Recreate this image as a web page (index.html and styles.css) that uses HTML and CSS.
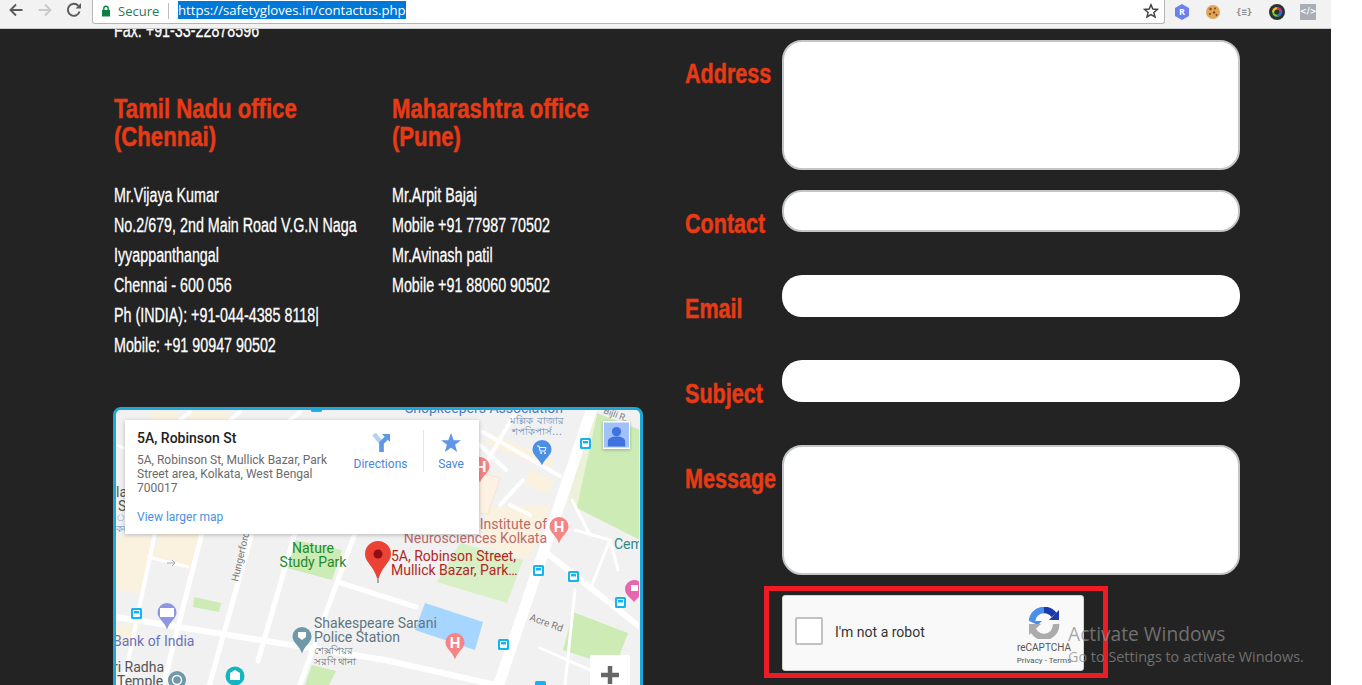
FILE: index.html
```html
<!DOCTYPE html>
<html lang="en">
<head>
<meta charset="utf-8">
<title>Contact us</title>
<link rel="stylesheet" href="styles.css">
</head>
<body>
<div class="window">
  <header class="toolbar">
    <div class="nav">
      <svg class="nav-icon" viewBox="0 0 16 16"><path d="M14.5 8H3M8 2.5 2.5 8 8 13.5" fill="none" stroke="#5a5a5a" stroke-width="1.9"/></svg>
      <svg class="nav-icon" viewBox="0 0 16 16"><path d="M1.5 8H13M8 2.5 13.5 8 8 13.5" fill="none" stroke="#c9c9c9" stroke-width="1.9"/></svg>
      <svg class="nav-icon" viewBox="0 0 16 16"><path d="M13.6 9.5A6 6 0 1 1 12.4 3.9" fill="none" stroke="#5a5a5a" stroke-width="1.9"/><path d="M9.6 6.4H15V1z" fill="#5a5a5a"/></svg>
    </div>
    <div class="omnibox">
      <svg class="lock" viewBox="0 0 10 12"><path d="M1 5h8v6.500H1z" fill="#0b8043"/><path d="M2.800 5V3.500a2.200 2.200 0 0 1 4.400 0V5" fill="none" stroke="#0b8043" stroke-width="1.400"/></svg>
      <span class="secure">Secure</span>
      <span class="omni-sep"></span>
      <span class="url">https://safetygloves.in/contactus.php</span>
      <svg class="star" viewBox="0 0 16 16"><path d="M8 1.800 9.800 6l4.600.4-3.500 3 1.100 4.500L8 11.500l-4 2.400 1.100-4.500-3.500-3L6.200 6z" fill="none" stroke="#444" stroke-width="1.500"/></svg>
    </div>
    <div class="exts">
      <svg class="ext" viewBox="0 0 16 16"><path d="M8 0 15 4v8l-7 4-7-4V4z" fill="#6a80ee"/><text x="8" y="11" class="ext-r">R</text></svg>
      <svg class="ext" viewBox="0 0 16 16"><circle cx="8" cy="8" r="7" fill="#e0a458"/><g fill="#7a4a1c"><circle cx="5.500" cy="5" r="1.200"/><circle cx="10" cy="4.500" r=".9"/><circle cx="9" cy="8.500" r="1.200"/><circle cx="5" cy="10" r="1"/><circle cx="11.500" cy="11" r="1"/></g></svg>
      <span class="ext-json">{≡}</span>
      <svg class="ext" viewBox="0 0 16 16"><circle cx="8" cy="8" r="8" fill="#2c3138"/><circle cx="8" cy="8" r="3.800" fill="none" stroke="#7ed321" stroke-width="2"/><path d="M8 4.200A3.800 3.800 0 0 1 11.800 8" fill="none" stroke="#e0218a" stroke-width="2"/><path d="M4.200 8A3.800 3.800 0 0 1 8 4.200" fill="none" stroke="#f8c300" stroke-width="2"/><path d="M8 11.800A3.800 3.800 0 0 0 11.800 8" fill="none" stroke="#1e6fe0" stroke-width="2"/></svg>
      <span class="ext-code">&lt;/&gt;</span>
    </div>
  </header>

  <main class="page">
    <section class="info">
      <p class="body-line fax">Fax: +91-33-22878596</p>
      <div class="offices">
        <article class="office">
          <h2 class="office-title">Tamil Nadu office<br>(Chennai)</h2>
          <p class="body-line">Mr.Vijaya Kumar</p>
          <p class="body-line">No.2/679, 2nd Main Road V.G.N Naga</p>
          <p class="body-line">Iyyappanthangal</p>
          <p class="body-line">Chennai - 600 056</p>
          <p class="body-line">Ph (INDIA): +91-044-4385 8118|</p>
          <p class="body-line">Mobile: +91 90947 90502</p>
        </article>
        <article class="office">
          <h2 class="office-title">Maharashtra office<br>(Pune)</h2>
          <p class="body-line">Mr.Arpit Bajaj</p>
          <p class="body-line">Mobile +91 77987 70502</p>
          <p class="body-line">Mr.Avinash patil</p>
          <p class="body-line">Mobile +91 88060 90502</p>
        </article>
      </div>

      <div class="map">
        <svg class="map-canvas" viewBox="116 410 523 275">
          <rect x="116" y="410" width="523" height="275" fill="#f1f1f1"/>
          <g fill="#fbf1df">
            <path d="M116 535h38l-12 60-26-6z"/><path d="M160 533h40l-10 36-38-9z"/><path d="M116 625h24l-8 18-16-3z"/>
            <path d="M490 433l64 27-4 10-64-26z"/><path d="M530 470l24 10-6 14-24-10z"/><path d="M487 507l63-2-8 24-14 30-48-14z"/>
            <path d="M150 412h30l-4 10h-26z"/><path d="M190 412h40l-4 8h-36z"/>
          </g>
          <path d="M479 472l21 6-12 36-9-1z" fill="#fdf1e4" stroke="#f9dcc0" stroke-width=".6"/>
          <g fill="#cdebb4">
            <path d="M295 540l47 10-10 30-45-12z"/>
            <path d="M194 597l27 6-2 9-26-5z"/>
            <path d="M573 612l55 21-13 34-52-17z"/>
            <path d="M312 665l24 6-8 16-24 0z"/>
            <path d="M597 413l43 17v110l-65-33z"/>
          </g>
          <path d="M460 543l63 17-16 43-70-21z" fill="#d9efc6"/>
          <path d="M597 415l-20 92-9-4 21-90z" fill="#ecf2d8"/>
          <path d="M425 603l58 19-8 28-60-20z" fill="#a6d6ff"/>
          <g fill="none" stroke="#fff" stroke-linecap="round">
            <path d="M593 405 497 690" stroke-width="11"/>
            <path d="M543 550 640 627" stroke-width="6"/>
            <path d="M110 616 385 660 500 686" stroke-width="6"/>
            <path d="M355 533 298 690" stroke-width="5"/>
            <path d="M295 533 258 661" stroke-width="5"/>
            <path d="M252 533 208 690" stroke-width="5"/>
            <path d="M202 533 162 690" stroke-width="5"/>
            <path d="M155 533 122 690" stroke-width="4"/>
            <path d="M148 557 188 567" stroke-width="3"/>
            <path d="M338 582 416 607" stroke-width="5"/>
            <path d="M483 432 560 476" stroke-width="4"/>
            <path d="M480 445 506 470" stroke-width="4"/>
            <path d="M523 480 500 505" stroke-width="4"/>
            <path d="M510 505 530 515" stroke-width="4"/>
            <path d="M520 405 482 470" stroke-width="4"/>
            <path d="M575 530 610 540 590 590" stroke-width="3"/>
            <path d="M610 540 618 570" stroke-width="3"/>
            <path d="M575 590 565 685" stroke-width="3"/>
            <path d="M540 648 590 670" stroke-width="3"/>
            <path d="M572 500 590 535" stroke-width="3"/>
            <path d="M116 445 130 450" stroke-width="3"/>
            <path d="M190 412 180 420M240 412 230 420M300 412 290 420" stroke-width="4"/>
          </g>
          <path d="M167 563h8m-3-3 3 3-3 3" fill="none" stroke="#9aa7b8" stroke-width="1"/>

          <g class="bengali">
            <text x="537" y="424" text-anchor="middle">মল্লিক বাজার</text>
            <text x="537" y="435" text-anchor="middle">শপকিপার্স…</text>
            <text x="116" y="521">ান</text>
            <text x="116" y="532">কল</text>
          </g>
          <text x="405" y="413" class="map-label blue">Shopkeepers Association</text>
          <text x="547" y="529" text-anchor="end" class="map-label red-soft">Institute of</text>
          <text x="547" y="543" text-anchor="end" class="map-label red-soft">Neurosciences Kolkata</text>
          <text x="313" y="553" text-anchor="middle" class="map-label green">Nature</text>
          <text x="313" y="567" text-anchor="middle" class="map-label green">Study Park</text>
          <text x="391" y="561" class="map-label red-strong">5A, Robinson Street,</text>
          <text x="391" y="575" class="map-label red-strong">Mullick Bazar, Park…</text>
          <text x="314" y="628" class="map-label slate">Shakespeare Sarani</text>
          <text x="314" y="642" class="map-label slate">Police Station</text>
          <text x="314" y="654" class="map-small slate">শেক্সপিয়র</text>
          <text x="314" y="665" class="map-small slate">সরণি থানা</text>
          <text x="113" y="646" class="map-label indigo">Bank of India</text>
          <text x="113" y="672" class="map-label gray">ri Radha</text>
          <text x="117" y="686" class="map-label gray">Temple</text>
          <text x="0" y="0" class="map-small road" transform="translate(529 620) rotate(20)">Acre Rd</text>
          <text x="0" y="0" class="map-small road" transform="translate(238 582) rotate(-77)">Hungerford</text>
          <text x="0" y="0" class="map-tiny road" transform="translate(603 413) rotate(20)">Bijli R…</text>
          <text x="614" y="549" class="map-label teal">Cem</text>
          <text x="116" y="497" class="map-label gray">la</text>
          <text x="118" y="511" class="map-label gray">S</text>

          <path d="M480 457a9.500 9.500 0 0 1 9.500 9.500c0 6-7 9-9.500 16-2.500-7-9.500-10-9.500-16a9.500 9.500 0 0 1 9.500-9.500z" fill="#f58484"/>
          <text x="481" y="472" class="pin-h">H</text>
          <path d="M559 517a9.500 9.500 0 0 1 9.500 9.500c0 6-7 9-9.500 17-2.500-8-9.500-11-9.500-17a9.500 9.500 0 0 1 9.500-9.500z" fill="#f58484"/>
          <text x="559" y="532" class="pin-h">H</text>
          <path d="M455 633a9.500 9.500 0 0 1 9.500 9.500c0 6-7 9-9.500 17-2.500-8-9.500-11-9.500-17a9.500 9.500 0 0 1 9.500-9.500z" fill="#f58484"/>
          <text x="455" y="648" class="pin-h">H</text>
          <path d="M542 440a9.500 9.500 0 0 1 9.500 9.500c0 6-7 9-9.500 16-2.500-7-9.500-10-9.500-16a9.500 9.500 0 0 1 9.500-9.500z" fill="#4b8fe6"/>
          <path d="M537 446h2l1 5h5l1-3.500h-7" fill="none" stroke="#fff" stroke-width="1"/><circle cx="541" cy="453" r=".9" fill="#fff"/><circle cx="545" cy="453" r=".9" fill="#fff"/>
          <path d="M167 603a9.500 9.500 0 0 1 9.500 9.500c0 6-7 9-9.500 17-2.500-8-9.500-11-9.500-17a9.500 9.500 0 0 1 9.500-9.500z" fill="#8f97e3"/>
          <rect x="160" y="608" width="14" height="9" fill="#fff"/>
          <path d="M302 627a9.500 9.500 0 0 1 9.500 9.500c0 6-7 9-9.500 17-2.500-8-9.500-11-9.500-17a9.500 9.500 0 0 1 9.500-9.500z" fill="#6f98a8"/>
          <path d="M298 632h8v5l-4 3-4-3z" fill="#fff"/>
          <circle cx="235" cy="676" r="9.500" fill="#12b5c1"/><path d="M230 673l5-3 5 3v7h-10z" fill="#fff"/>
          <circle cx="177" cy="680" r="9" fill="#6f98a8"/><circle cx="177" cy="680" r="4.500" fill="none" stroke="#fff" stroke-width="1.500"/>
          <path d="M634 580a9 9 0 0 1 9 9c0 6-6 9-9 13-3-4-9-7-9-13a9 9 0 0 1 9-9z" fill="#e667b0"/>
          <rect x="631" y="585" width="7" height="6" fill="#fff"/>

          <g class="transit">
            <rect x="131" y="608" width="11" height="11" rx="1.500"/>
            <rect x="580" y="438" width="11" height="11" rx="1.500"/>
            <rect x="533" y="565" width="11" height="11" rx="1.500"/>
            <rect x="568" y="571" width="11" height="11" rx="1.500"/>
            <rect x="615" y="597" width="11" height="11" rx="1.500"/>
            <rect x="498" y="639" width="11" height="11" rx="1.500"/>
            <rect x="535" y="681" width="11" height="11" rx="1.500"/>
            <rect x="311" y="405" width="11" height="7" rx="1.500"/>
          </g>
          <g fill="#fff">
            <rect x="133" y="610" width="7" height="7" rx="1"/><rect x="582" y="440" width="7" height="7" rx="1"/><rect x="535" y="567" width="7" height="7" rx="1"/><rect x="570" y="573" width="7" height="7" rx="1"/><rect x="617" y="599" width="7" height="7" rx="1"/><rect x="500" y="641" width="7" height="7" rx="1"/>
          </g>
          <g fill="#14b4f0">
            <rect x="134" y="611" width="5" height="2.500"/><rect x="583" y="441" width="5" height="2.500"/><rect x="536" y="568" width="5" height="2.500"/><rect x="571" y="574" width="5" height="2.500"/><rect x="618" y="600" width="5" height="2.500"/><rect x="501" y="642" width="5" height="2.500"/>
          </g>

          <path d="M378 541a13 13 0 0 1 13 13c0 9-10 12-13 28-3-16-13-19-13-28a13 13 0 0 1 13-13z" fill="#ea4335"/>
          <circle cx="378" cy="554" r="4.500" fill="#8f1010"/>
          <rect x="377" y="578" width="2" height="5" fill="#aaa"/>
        </svg>

        <div class="person-btn">
          <svg viewBox="0 0 26 26"><rect width="26" height="26" fill="#a1c1fb"/><circle cx="13" cy="9.500" r="4.800" fill="#3f74e0"/><path d="M4 25v-5c0-4 4-5.500 9-5.500s9 1.500 9 5.500v5z" fill="#3f74e0"/></svg>
        </div>
        <div class="zoom-btn"><svg viewBox="0 0 18 18"><path d="M9 0v18M0 9h18" stroke="#666" stroke-width="4.500"/></svg></div>

        <div class="card">
          <div class="card-main">
            <h3 class="card-title">5A, Robinson St</h3>
            <p class="card-address">5A, Robinson St, Mullick Bazar, Park Street area, Kolkata, West Bengal 700017</p>
            <a class="card-link">View larger map</a>
          </div>
          <div class="card-action directions">
            <svg viewBox="0 0 20 20"><path d="M3 1 10.500 10v9" fill="none" stroke="#b4d0f5" stroke-width="4.500"/><path d="M10.500 19v-9l5-5" fill="none" stroke="#5f97e6" stroke-width="4.500"/><path d="M11 1h8v8z" fill="#5f97e6"/></svg>
            <span>Directions</span>
          </div>
          <div class="card-action save">
            <svg viewBox="0 0 20 20"><path d="M10 0l2.700 7.200H20l-5.900 4.600L16.200 19 10 14.700 3.800 19l2.100-7.200L0 7.200h7.300z" fill="#5f97e6"/></svg>
            <span>Save</span>
          </div>
        </div>
      </div>
    </section>

    <form class="contact-form">
      <div class="form-row"><label class="form-label">Address</label><div class="field field-area"></div></div>
      <div class="form-row"><label class="form-label">Contact</label><div class="field field-line bordered"></div></div>
      <div class="form-row"><label class="form-label">Email</label><div class="field field-line"></div></div>
      <div class="form-row"><label class="form-label">Subject</label><div class="field field-line"></div></div>
      <div class="form-row"><label class="form-label">Message</label><div class="field field-area"></div></div>
      <div class="captcha-row">
        <div class="captcha">
          <span class="captcha-check"></span>
          <span class="captcha-text">I'm not a robot</span>
          <div class="captcha-brand">
            <svg viewBox="0 0 32 32"><path d="M4 14A12 12 0 0 1 16 3" fill="none" stroke="#4a8fe8" stroke-width="6.500"/><path d="M16 3A12 12 0 0 1 26 8" fill="none" stroke="#1c3aa9" stroke-width="6.500"/><path d="M21 13H31V3z" fill="#1c3aa9"/><path d="M1 14h13l-4 4z" fill="#4a8fe8"/><path d="M28 17A12 12 0 0 1 4 19" fill="none" stroke="#ababab" stroke-width="6.500"/><path d="M1 17h12L1 28z" fill="#ababab"/></svg>
            <span class="captcha-name">reCAPTCHA</span>
            <span class="captcha-terms">Privacy - Terms</span>
          </div>
        </div>
      </div>
    </form>
    <div class="watermark">
      <span class="wm-title">Activate Windows</span>
      <span class="wm-sub">Go to Settings to activate Windows.</span>
    </div>
  </main>
</div>
</body>
</html>
```

FILE: styles.css
```css
*, *::before { box-sizing: border-box; }
html, body { margin: 0; height: 100%; background: #fff; overflow: hidden; }
p, h2, h3 { margin: 0; }

.window { width: 1331px; height: 685px; overflow: hidden; display: flex; flex-direction: column; }

.toolbar { position: relative; z-index: 2; flex: 0 0 29px; height: 29px; display: flex; background: #f2f2f2; border-bottom: 1px solid #c9c9c9; }
.nav { width: 92px; display: flex; gap: 13px; padding: 2px 0 0 8px; }
.nav-icon { width: 16px; height: 16px; flex: none; }
.omnibox { width: 1073px; height: 24px; display: flex; align-items: center; background: #fff; border: 1px solid #b5b5b5; border-top: 0; border-radius: 0 0 3px 3px; padding: 0 5px 2px 8px; font-family: "Open Sans", sans-serif; }
.lock { width: 10px; height: 12px; flex: none; }
.secure { color: #2c7a55; margin-left: 7px; width: 42px; font-size: 13px; }
.omni-sep { width: 1px; height: 16px; background: #bdbdbd; margin: 0 9px 0 8px; }
.url { background: #0078d7; color: #fff; height: 18px; line-height: 18px; white-space: nowrap; margin-bottom: 2px; font-size: 13.200px; }
.star { width: 16px; height: 16px; margin-left: auto; }
.exts { flex: 1; display: flex; align-items: center; gap: 15px; padding: 0 0 5px 9px; }
.ext { width: 16px; height: 16px; flex: none; }
.ext-r { font: 700 9px "Open Sans", sans-serif; fill: #fff; text-anchor: middle; }
.ext-json { width: 18px; color: #8a8a8a; font: 700 9px "DejaVu Sans Mono", monospace; white-space: nowrap; }
.ext-code { width: 16px; height: 16px; background: #a9adb5; color: #fff; font: 700 8px/16px "DejaVu Sans", sans-serif; text-align: center; white-space: nowrap; }

.page { position: relative; flex: 1; min-height: 0; display: flex; background: #232323; overflow: hidden; }
.info { width: 670px; flex: none; padding-left: 114px; }
.body-line { width: max-content; font: 400 20px/30px "Liberation Sans", sans-serif; color: #fff; white-space: nowrap; transform: scaleX(.715); transform-origin: left center; -webkit-text-stroke: .3px #fff; }
.fax { margin-top: -14px; }
.offices { display: flex; margin-top: 50px; }
.office { width: 278px; flex: none; }
.office-title { width: max-content; margin-bottom: 29px; font: 700 28px/28px "Liberation Sans", sans-serif; color: #e83a14; white-space: nowrap; transform: scaleX(.79); transform-origin: left center; -webkit-text-stroke: .5px #e83a14; }

.map { position: relative; width: 530px; height: 300px; margin-top: 47px; margin-left: -1px; border: 3px solid #1ea8d8; border-radius: 8px; overflow: hidden; background: #f1f1f1; }
.map-canvas { display: block; width: 523px; height: 275px; }
.map-label { font: 400 14px "Roboto", sans-serif; }
.map-small { font: 400 10px "Roboto", "Noto Sans", sans-serif; }
.map-tiny { font: 400 9px "Roboto", sans-serif; }
.bengali { font: 400 10px "DejaVu Sans", sans-serif; fill: #6a8fbd; }
.blue { fill: #4a7fc0; }
.red-soft { fill: #bd6a6a; }
.red-strong { fill: #b3261e; }
.green { fill: #1e8a2e; }
.slate { fill: #60757f; }
.indigo { fill: #6a72b8; }
.gray { fill: #555; }
.teal { fill: #2f8a85; }
.road { fill: #7c7c7c; }
.pin-h { font: 700 15px "Roboto", sans-serif; fill: #fff; text-anchor: middle; }
.transit { fill: #14b4f0; }

.person-btn { position: absolute; left: 487px; top: 11px; width: 27px; height: 28px; background: #fff; box-shadow: 0 1px 3px rgba(0,0,0,.25); padding: 1px; }
.person-btn svg { display: block; width: 25px; height: 26px; }
.zoom-btn { position: absolute; left: 474px; top: 245px; width: 40px; height: 40px; background: #fff; border-radius: 2px; padding: 11px; }
.zoom-btn svg { display: block; width: 18px; height: 18px; }

.card { position: absolute; left: 9px; top: 10px; width: 354px; height: 114px; display: flex; background: #fff; box-shadow: 0 1px 4px rgba(0,0,0,.25); font-family: "Roboto", sans-serif; }
.card-main { width: 211px; flex: none; padding: 10px 0 0 12px; }
.card-title { font-size: 14px; font-weight: 500; line-height: 16px; color: #222; white-space: nowrap; }
.card-address { margin-top: 7px; font-size: 12px; line-height: 14px; color: #6b6b6b; width: 200px; }
.card-link { display: block; margin-top: 15px; font-size: 12px; line-height: 14px; color: #4a90e2; white-space: nowrap; }
.card-action { display: flex; flex-direction: column; align-items: center; font-size: 12px; color: #4a86d8; height: 42px; margin-top: 10px; }
.card-action svg { width: 20px; height: 20px; margin-top: 3px; margin-bottom: 4px; flex: none; }
.directions { width: 88px; padding-left: 2px; border-right: 1px solid #e6e6e6; }
.save { width: 54px; }

.contact-form { width: 555px; flex: none; margin: 11px 0 0 15px; display: flex; flex-direction: column; gap: 20px; }
.form-row { display: flex; }
.form-label { width: 126px; margin-right: -29px; flex: none; height: 65px; padding-top: 20px; font: 700 28px/28px "Liberation Sans", sans-serif; color: #e83a14; white-space: nowrap; transform: scaleX(.77); transform-origin: left center; -webkit-text-stroke: .5px #e83a14; }
.field { width: 458px; background: #fff; }
.field-area { height: 130px; border: 2px solid #c2c6c8; border-radius: 20px; }
.field-line { height: 42px; border-radius: 20px; }
.bordered { border: 2px solid #c2c6c8; }
.form-row:first-child, .form-row:nth-child(5) { height: 130px; }

.captcha-row { height: 76px; display: flex; padding-left: 97px; position: relative; }
.captcha-row::before { content: ""; position: absolute; left: 79px; top: -9px; width: 344px; height: 92px; border: 5px solid #ed1c24; }
.captcha { position: relative; width: 302px; height: 76px; display: flex; align-items: center; padding-bottom: 4px; background: #f9f9f9; border: 1px solid #d3d3d3; border-radius: 3px; font-family: "Roboto", sans-serif; }
.captcha-check { width: 28px; height: 28px; margin-left: 12px; background: #fff; border: 2px solid #c1c1c1; border-radius: 2px; flex: none; }
.captcha-text { margin: 2px 0 0 12px; font-size: 14px; color: #333; white-space: nowrap; }
.captcha-brand { position: absolute; left: 233px; top: 11px; width: 56px; display: flex; flex-direction: column; align-items: center; }
.captcha-brand svg { width: 32px; height: 32px; margin-bottom: 3px; }
.captcha-name { font-size: 10px; line-height: 12px; color: #555; white-space: nowrap; }
.captcha-terms { font-size: 8px; line-height: 13px; color: #555; white-space: nowrap; }

.watermark { position: absolute; left: 1068px; top: 591px; display: flex; flex-direction: column; font-family: "Open Sans", sans-serif; color: rgba(140,140,140,.75); white-space: nowrap; }
.wm-title { font-size: 19.200px; line-height: 27px; }
.wm-sub { font-size: 14.400px; line-height: 20px; }
```
